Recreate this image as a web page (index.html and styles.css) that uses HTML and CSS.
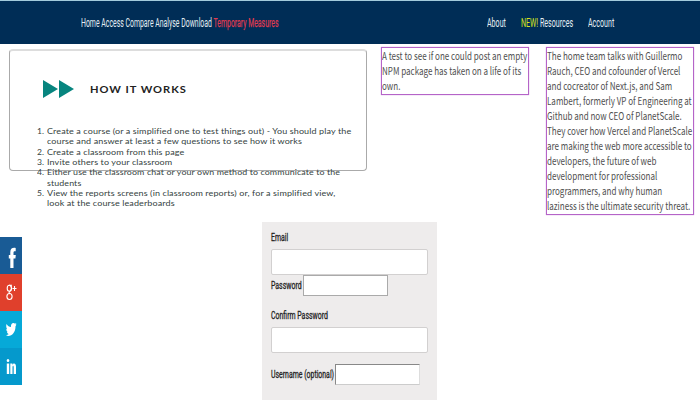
FILE: index.html
```html
<!DOCTYPE html>
<html lang="en">
<head>
<meta charset="utf-8">
<title>Classroom</title>
<link rel="stylesheet" href="styles.css">
</head>
<body>
<header class="bar">
  <nav class="nav nav-main"><span>Home</span> <span>Access</span> <span>Compare</span> <span>Analyse</span> <span>Download</span> <span class="alert">Temporary Measures</span></nav>
  <nav class="nav nav-side"><span class="link about">About</span><span class="link resources"><b>NEW!</b> Resources</span><span class="link account">Account</span></nav>
</header>
<main>
  <section class="top">
    <article class="how">
      <div class="how-head">
        <svg class="arrows" viewBox="0 0 31 18" width="31" height="18"><path d="M0 0L15 9L0 18ZM16 0L31 9L16 18Z" fill="#07857f"/></svg>
        <h2>HOW IT WORKS</h2>
      </div>
      <ol class="steps">
        <li><span>Create a course (or a simplified one to test things out) - You should play the<br>course and answer at least a few questions to see how it works</span></li>
        <li><span>Create a classroom from this page</span></li>
        <li><span>Invite others to your classroom</span></li>
        <li><span class="tight">Either use the classroom chat or your own method to communicate to the<br>students</span></li>
        <li><span>View the reports screens (in classroom reports) or, for a simplified view,<br>look at the course leaderboards</span></li>
      </ol>
    </article>
    <article class="note"><p>A test to see if one could post an empty<br>NPM package has taken on a life of its<br>own.</p></article>
    <article class="note"><p>The home team talks with Guillermo<br>Rauch, CEO and cofounder of Vercel<br>and cocreator of Next.js, and Sam<br>Lambert, formerly VP of Engineering at<br>Github and now CEO of PlanetScale.<br>They cover how Vercel and PlanetScale<br>are making the web more accessible to<br>developers, the future of web<br>development for professional<br>programmers, and why human<br>laziness is the ultimate security threat.</p></article>
  </section>
  <section class="bottom">
    <aside class="social">
      <div class="tile fb"><svg viewBox="0 0 22 37"><path d="M10.300 31V21.500H8.800V18H10.300V15.500C10.300 11.500 12.300 10.300 15.700 10.900V14.300C14.200 14.100 13.500 14.500 13.500 15.800V18H15.800L15.400 21.500H13.500V31Z"/></svg></div>
      <div class="tile gp"><svg viewBox="0 0 22 37"><g fill="none" stroke="#fff" stroke-width="1.100"><ellipse cx="9.300" cy="14.200" rx="2.100" ry="3"/><path d="M9 11.200H12M10.500 11.500C12 13.500 11.600 15.900 10 17.100C8.500 18.200 9 19.100 10.200 19.900"/><ellipse cx="9.500" cy="22.500" rx="2.600" ry="3"/><path d="M12.500 14.500H16.500M14.500 12V17"/></g></svg></div>
      <div class="tile tw"><svg viewBox="0 0 22 37"><path d="M6.500 13C7.700 15 9.200 16 11 16.100C10.700 13.500 12 12 13.400 12C14.100 12 14.700 12.400 15 12.800L16.300 12.100L15.700 13.800L16.500 13.500L15.500 15.300C15.600 21 12.200 25 8.300 25C7.500 25 6.700 24.700 6 24.100C7.200 24.100 8 23.700 8.700 23C7.800 22.700 7.200 22 7 21H7.700C6.800 20.300 6.300 19.300 6.300 18L7.100 18.300C6.200 16.800 6 14.700 6.500 13Z"/></svg></div>
      <div class="tile in"><svg viewBox="0 0 22 37"><path d="M6.800 15.500H9.200V26H6.800ZM10.300 15.500H12.400V17C13.400 14.700 16 15 16 18.700V26H13.700V19.500C13.700 17 12.500 17.300 12.500 19.300V26H10.300Z"/><ellipse cx="8" cy="12.500" rx="1.300" ry="1.600"/></svg></div>
    </aside>
    <form class="signup">
      <label class="email"><span class="text">Email</span></label>
      <input class="wide" type="text" aria-label="Email">
      <div class="row pass"><span class="text">Password</span><input class="small" type="password" aria-label="Password"></div>
      <label class="confirm"><span class="text">Confirm Password</span></label>
      <input class="wide second" type="password" aria-label="Confirm Password">
      <div class="row user"><span class="text">Username (optional)</span><input class="small sunken" type="text" aria-label="Username"></div>
    </form>
  </section>
</main>
</body>
</html>
```
FILE: styles.css
```css
* { box-sizing: border-box; }
body { margin: 0; width: 700px; height: 400px; overflow: hidden; background: #fff; }
.bar {
  height: 44px; display: flex; padding-left: 81px;
  background: #002d56; border-top: 1px solid #a3cbdc;
  font: 12px/44px Roboto, sans-serif; color: #e4edf3;
}
.nav { white-space: nowrap; }
.nav-main { width: 406px; transform: scaleX(.575); transform-origin: 0 0; }
.alert { color: #df3a50; -webkit-text-stroke: .25px #df3a50; }
.nav-side { display: flex; }
.link { transform: scaleX(.59); transform-origin: 0 0; }
.about { width: 34px; }
.resources { width: 67px; }
.link b { color: #d5e51e; font-weight: 400; }
.top { display: flex; align-items: flex-start; height: 178px; padding: 3px 5px 0 9px; }
.how {
  width: 358px; height: 122px; margin: 2px 14px 0 0;
  border: 1px solid #aaa; border-top: 2px solid #ddd; border-radius: 4px;
}
.how-head { display: flex; align-items: center; height: 18px; margin: 29px 0 0 33px; }
h2 {
  margin: 2px 0 0 15.500px; font: 700 9px/18px Lato, sans-serif; letter-spacing: .8px;
  color: #222; white-space: nowrap; transform: scaleX(1.23); transform-origin: 0 0;
}
.steps {
  margin: 28px 0 0 27px; padding: 0; width: 320px;
  font: 7.800px/10.350px Lato, sans-serif; color: #34423e; white-space: nowrap;
}
.steps li { list-style: none; counter-increment: step; display: flex; }
.steps li::before { content: counter(step) "."; width: 10px; flex: none; transform: scaleX(1.1); transform-origin: 0 0; }
.steps span { letter-spacing: .1px; transform: scaleX(1.155); transform-origin: 0 0; }
.steps .tight { transform: scaleX(1.135); }
.note { width: 148px; height: 48px; margin-right: 17px; border: 1px solid #b564c8; box-shadow: 0 0 1px #c88bd8; }
.note + .note { height: 168px; margin-right: 0; }
.note p {
  margin: 0; font: 11px/15px "Noto Sans CJK SC", "Noto Sans", sans-serif; color: #505050;
  white-space: nowrap; width: 146px; transform: scaleX(.73); transform-origin: 0 0;
}
.bottom { display: flex; height: 178px; }
.social { width: 22px; margin: 15px 240px 0 0; height: 148px; }
.tile { height: 37px; }
.tile svg { display: block; width: 22px; height: 37px; fill: #fff; }
.fb { background: #195b95; }
.gp { background: #e0402c; }
.tw { background: #06a9d8; }
.in { background: #0599cc; }
.signup {
  width: 175px; height: 178px; padding: 9px 9px 0; background: #eeecec;
  font: 11px/13px Roboto, sans-serif; color: #222; -webkit-text-stroke: .3px #222;
}
.text { display: block; white-space: nowrap; transform: scaleX(.63); transform-origin: 0 0; }
input { display: block; margin: 0; padding: 0; background: #fff; border: 1px solid #d2d0d0; }
.email, .confirm { display: block; height: 18px; }
.wide { width: 157px; height: 26px; border-radius: 2px; }
.row { display: flex; align-items: center; }
.row .text { width: 32px; flex: none; }
.small { width: 85px; height: 21px; border: 1px solid #aaa; }
.pass { height: 21px; margin-top: 0; }
.confirm { margin-top: 13px; }
.user { height: 21px; margin-top: 11px; }
.user .text { width: 64px; }
.sunken { border-color: #888 #ddd #ccc #888; }
```
